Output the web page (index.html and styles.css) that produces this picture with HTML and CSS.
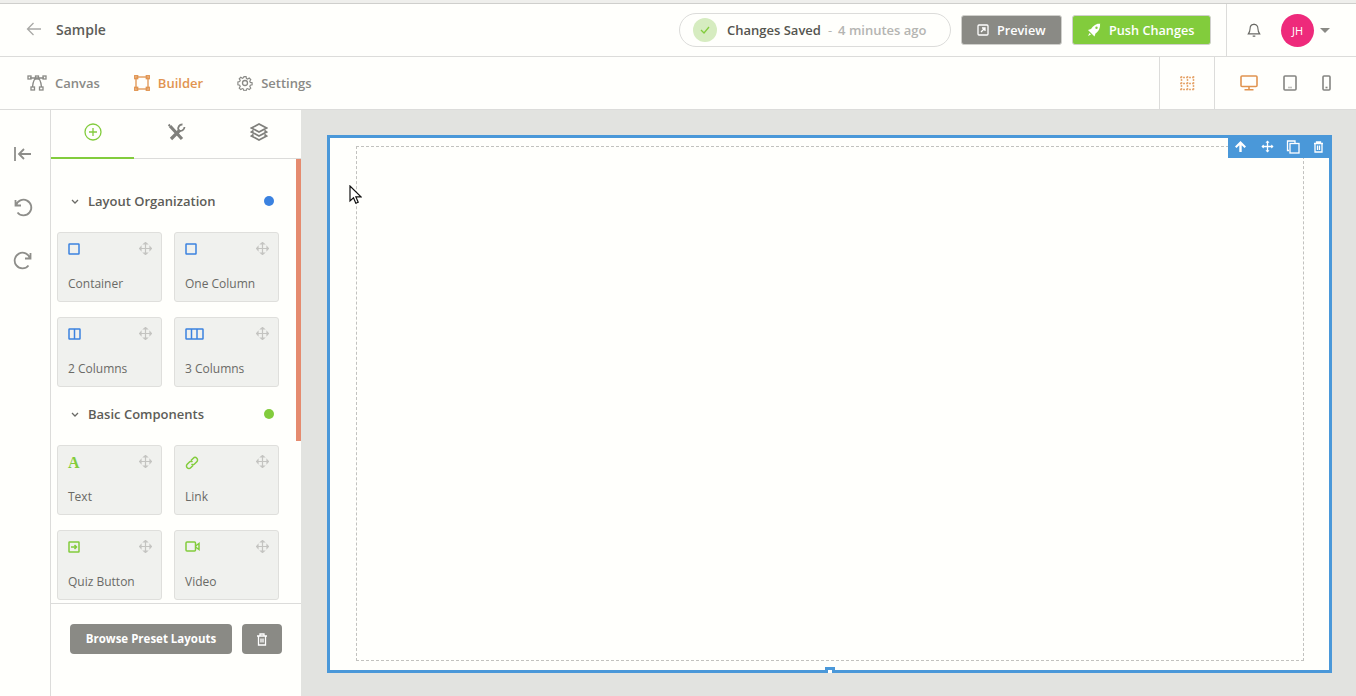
FILE: index.html
```html
<!DOCTYPE html>
<html lang="en">
  <head>
    <meta charset="UTF-8" />
    <title>Sample - Builder</title>
    <link rel="stylesheet" href="styles.css">
  </head>
  <body>
    <div class="top-bar">
      <div class="title-group">
        <svg class="back-icon" width="16" height="14" viewBox="0 0 16 14"><path d="M15 7H1.500M7.500 1l-6 6 6 6" /></svg>
        <span class="page-title">Sample</span>
      </div>
      <div class="save-pill">
        <span class="save-check">
          <svg width="10" height="8" viewBox="0 0 10 8"><path d="M1 4l3 3 5-6" /></svg>
        </span>
        <span class="save-text">Changes Saved</span>
        <span class="save-dash">-</span>
        <span class="save-time">4 minutes ago</span>
      </div>
      <button class="btn btn-grey">
        <svg width="12" height="12" viewBox="0 0 12 12"><rect x="1" y="1" width="10" height="10" rx="1" /><path d="M4 8l4-4M5 4h3v3" /></svg>
        Preview
      </button>
      <button class="btn btn-green">
        <svg width="14" height="14" viewBox="0 0 14 14"><path class="solid" fill-rule="evenodd" d="M13.500.500C9.500.500 6 2.500 4 6L1 7l2 2 2.500 2.500 2 2 1-3c3-2 5-5.500 4.500-10zM9.500 3.500a1.200 1.200 0 1 1 0 2.400 1.200 1.200 0 0 1 0-2.400zM2.500 10 1 13l3-1.500z" /></svg>
        Push Changes
      </button>
      <div class="user-area">
        <svg class="bell" width="14" height="16" viewBox="0 0 16 17"><path d="M8 2c-3 0-4.500 2-4.500 5 0 3-1 4.500-2 6h13c-1-1.500-2-3-2-6 0-3-1.500-5-4.500-5zM8 1v1M6.500 15.500h3" /></svg>
        <span class="avatar">JH</span>
        <span class="caret"></span>
      </div>
    </div>

    <div class="nav-bar">
      <a class="nav-item">
        <svg width="20" height="16" viewBox="0 0 20 16"><path d="M3 3h14M10 3C7 3 6 7 5.500 12M10 3c3 0 4 4 4.500 9" /><rect x="1" y="1" width="3" height="3" /><rect x="8.500" y="1" width="3" height="3" /><rect x="16" y="1" width="3" height="3" /><rect x="4" y="12" width="3.500" height="3" /><rect x="12.500" y="12" width="3.500" height="3" /></svg>
        Canvas
      </a>
      <a class="nav-item active">
        <svg width="16" height="16" viewBox="0 0 16 16"><rect x="2" y="2" width="12" height="12" /><rect class="handle" x="0.700" y="0.700" width="3" height="3" /><rect class="handle" x="12.300" y="0.700" width="3" height="3" /><rect class="handle" x="0.700" y="12.300" width="3" height="3" /><rect class="handle" x="12.300" y="12.300" width="3" height="3" /></svg>
        Builder
      </a>
      <a class="nav-item">
        <svg width="16" height="16" viewBox="0 0 16 16"><circle cx="8" cy="8" r="2.500" /><path d="M6.800 1h2.400l.4 2 1.300.6 1.800-1.100 1.700 1.700-1.100 1.800.6 1.300 2 .4v2.400l-2 .4-.6 1.300 1.100 1.800-1.700 1.700-1.800-1.100-1.300.6-.4 2H6.800l-.4-2-1.300-.6-1.800 1.100-1.700-1.700 1.100-1.800-.6-1.300-2-.4V6.800l2-.4.6-1.300-1.100-1.800 1.700-1.700 1.800 1.100 1.300-.6z" transform="translate(0.800 0.800) scale(.9)" /></svg>
        Settings
      </a>
      <div class="view-tools">
        <div class="tool-cell grid-cell">
          <svg width="15" height="15" viewBox="0 0 15 15"><path class="dots" d="M0 1.500h15M0 7.500h15M0 13.500h15M1.500 0v15M7.500 0v15M13.500 0v15" /></svg>
        </div>
        <div class="tool-cell device-cell">
          <svg class="active-device" width="18" height="16" viewBox="0 0 18 16"><rect x="1" y="1" width="16" height="10.500" rx="1" /><path d="M9 11.500V14M4.500 14.800h9" /></svg>
          <svg width="14" height="16" viewBox="0 0 14 16"><rect x="1" y="1" width="12" height="14" rx="1" /><path class="pale" d="M5 12.500h4" /></svg>
          <svg width="9" height="16" viewBox="0 0 9 16"><rect x="1" y="1" width="7" height="14" rx="1" /><path d="M3.500 12.500h2" /></svg>
        </div>
      </div>
    </div>

    <div class="workspace">
      <div class="rail">
        <svg class="collapse" width="20" height="16" viewBox="0 0 20 16"><path d="M2 1v14M18 8H6M11 3 6 8l5 5" /></svg>
        <svg width="20" height="20" viewBox="0 0 20 20"><path d="M2.500 3v5.500H8M3 8.500a7.800 7.800 0 1 1 1.500 7" /></svg>
        <svg width="20" height="20" viewBox="0 0 20 20"><path d="M17.500 3v5.500H12M17 8.500a7.800 7.800 0 1 0-1.500 7" /></svg>
      </div>

      <div class="panel">
        <div class="panel-tabs">
          <div class="panel-tab selected">
            <svg width="18" height="18" viewBox="0 0 18 18"><circle cx="9" cy="9" r="8" /><path d="M9 5v8M5 9h8" /></svg>
          </div>
          <div class="panel-tab">
            <svg class="tools-icon" width="19" height="19" viewBox="0 0 19 19"><path class="thick" d="M3 3l12 13M13 7 4 16" /><path d="M15.500 1.500a4 4 0 0 0-4 5.500M17.500 4a4 4 0 0 1-5.500 3.500M1.500 3 3 1.500" /></svg>
          </div>
          <div class="panel-tab">
            <svg class="layers-icon" width="18" height="18" viewBox="0 0 18 18"><path d="M9 1 1.500 5 9 9l7.500-4zM3.500 7.500 1.500 9 9 13l7.500-4-2-1.500M3.500 11.500l-2 1.500L9 17l7.500-4-2-1.500" /></svg>
          </div>
        </div>

        <div class="panel-body">
          <div class="scroll-thumb"></div>

          <div class="section-head first">
            <svg width="8" height="5" viewBox="0 0 8 5"><path d="M1 1l3 3 3-3" /></svg>
            <span class="section-name">Layout Organization</span>
            <span class="dot dot-blue"></span>
          </div>
          <div class="card-grid blue">
            <div class="card">
              <div class="card-top">
                <svg class="item-icon" width="12" height="12" viewBox="0 0 12 12"><rect x="1" y="1" width="10" height="10" rx=".5" /></svg>
                <svg class="drag" width="13" height="13" viewBox="0 0 13 13"><path d="M6.500 0v13M0 6.500h13M4.800 2 6.500.5 8.200 2zM4.800 11l1.700 1.500L8.200 11zM2 4.800.5 6.500 2 8.200zM11 4.800l1.500 1.700L11 8.200z" /></svg>
              </div>
              <span class="card-label">Container</span>
            </div>
            <div class="card">
              <div class="card-top">
                <svg class="item-icon" width="12" height="12" viewBox="0 0 12 12"><rect x="1" y="1" width="10" height="10" rx=".5" /></svg>
                <svg class="drag" width="13" height="13" viewBox="0 0 13 13"><path d="M6.500 0v13M0 6.500h13M4.800 2 6.500.5 8.200 2zM4.800 11l1.700 1.500L8.200 11zM2 4.800.5 6.500 2 8.200zM11 4.800l1.500 1.700L11 8.200z" /></svg>
              </div>
              <span class="card-label">One Column</span>
            </div>
            <div class="card">
              <div class="card-top">
                <svg class="item-icon" width="13" height="12" viewBox="0 0 13 12"><rect x="1" y="1" width="11" height="10" rx=".5" /><path d="M6.500 1v10" /></svg>
                <svg class="drag" width="13" height="13" viewBox="0 0 13 13"><path d="M6.500 0v13M0 6.500h13M4.800 2 6.500.5 8.200 2zM4.800 11l1.700 1.500L8.200 11zM2 4.800.5 6.500 2 8.200zM11 4.800l1.500 1.700L11 8.200z" /></svg>
              </div>
              <span class="card-label">2 Columns</span>
            </div>
            <div class="card">
              <div class="card-top">
                <svg class="item-icon" width="19" height="12" viewBox="0 0 19 12"><rect x="1" y="1" width="17" height="10" rx=".5" /><path d="M6.500 1v10M12 1v10" /></svg>
                <svg class="drag" width="13" height="13" viewBox="0 0 13 13"><path d="M6.500 0v13M0 6.500h13M4.800 2 6.500.5 8.200 2zM4.800 11l1.700 1.500L8.200 11zM2 4.800.5 6.500 2 8.200zM11 4.800l1.500 1.700L11 8.200z" /></svg>
              </div>
              <span class="card-label">3 Columns</span>
            </div>
          </div>

          <div class="section-head">
            <svg width="8" height="5" viewBox="0 0 8 5"><path d="M1 1l3 3 3-3" /></svg>
            <span class="section-name">Basic Components</span>
            <span class="dot dot-green"></span>
          </div>
          <div class="card-grid green">
            <div class="card">
              <div class="card-top">
                <span class="text-glyph">A</span>
                <svg class="drag" width="13" height="13" viewBox="0 0 13 13"><path d="M6.500 0v13M0 6.500h13M4.800 2 6.500.5 8.200 2zM4.800 11l1.700 1.500L8.200 11zM2 4.800.5 6.500 2 8.200zM11 4.800l1.500 1.700L11 8.200z" /></svg>
              </div>
              <span class="card-label">Text</span>
            </div>
            <div class="card">
              <div class="card-top">
                <svg class="item-icon" width="14" height="14" viewBox="0 0 14 14"><path d="M6 4.500 8.300 2.200a2.200 2.200 0 0 1 3.500 3.500L9.500 8a2.200 2.200 0 0 1-3 0M8 9.500l-2.300 2.300a2.200 2.200 0 0 1-3.500-3.500L4.500 6a2.200 2.200 0 0 1 3 0" /></svg>
                <svg class="drag" width="13" height="13" viewBox="0 0 13 13"><path d="M6.500 0v13M0 6.500h13M4.800 2 6.500.5 8.200 2zM4.800 11l1.700 1.500L8.200 11zM2 4.800.5 6.500 2 8.200zM11 4.800l1.500 1.700L11 8.200z" /></svg>
              </div>
              <span class="card-label">Link</span>
            </div>
            <div class="card">
              <div class="card-top">
                <svg class="item-icon" width="12" height="12" viewBox="0 0 12 12"><rect x="1" y="1" width="10" height="10" rx=".5" /><path d="M3 6h5.500M6.500 4l2 2-2 2" /></svg>
                <svg class="drag" width="13" height="13" viewBox="0 0 13 13"><path d="M6.500 0v13M0 6.500h13M4.800 2 6.500.5 8.200 2zM4.800 11l1.700 1.500L8.200 11zM2 4.800.5 6.500 2 8.200zM11 4.800l1.500 1.700L11 8.200z" /></svg>
              </div>
              <span class="card-label">Quiz Button</span>
            </div>
            <div class="card">
              <div class="card-top">
                <svg class="item-icon" width="15" height="11" viewBox="0 0 15 11"><rect x="1" y="1" width="9.500" height="9" rx="1" /><path d="M10.500 5 14 2.500v6L10.500 6" /></svg>
                <svg class="drag" width="13" height="13" viewBox="0 0 13 13"><path d="M6.500 0v13M0 6.500h13M4.800 2 6.500.5 8.200 2zM4.800 11l1.700 1.500L8.200 11zM2 4.800.5 6.500 2 8.200zM11 4.800l1.500 1.700L11 8.200z" /></svg>
              </div>
              <span class="card-label">Video</span>
            </div>
          </div>
        </div>

        <div class="panel-foot">
          <button class="foot-btn browse">Browse Preset Layouts</button>
          <button class="foot-btn trash">
            <svg width="12" height="13" viewBox="0 0 12 13"><path d="M1 3h10M4 3V1h4v2M2.500 3v9h7V3M5 5.500v4M7 5.500v4" /></svg>
          </button>
        </div>
      </div>

      <div class="stage">
        <div class="frame">
          <div class="frame-tools">
            <svg width="13" height="13" viewBox="0 0 13 13"><path class="solid" d="M6.500 1 12 6.500 10.500 8 7.700 5.300V12H5.300V5.300L2.500 8 1 6.500z" /></svg>
            <svg class="move-tool" width="13" height="13" viewBox="0 0 13 13"><path d="M6.500 1v11M1 6.500h11" /><path class="solid" d="M4.500 2.800 6.500.4l2 2.400zM4.500 10.200l2 2.400 2-2.400zM2.800 4.500.4 6.500l2.400 2zM10.200 4.500l2.400 2-2.400 2z" /></svg>
            <svg width="14" height="14" viewBox="0 0 14 14"><path d="M3 10.500H1.500V1H9v2" /><rect x="4" y="3.500" width="9" height="9.500" /></svg>
            <svg width="11" height="12" viewBox="0 0 11 12"><path d="M1 2.500h9M3.500 2.500V1h4v1.500M2 2.500V11h7V2.500M4.500 4.500v4.500M6.500 4.500v4.500" /></svg>
          </div>
          <div class="drop-zone"></div>
          <span class="resize-handle"></span>
        </div>
      </div>
    </div>

    <svg class="cursor" width="13" height="20" viewBox="0 0 13 20"><path d="M1 1v15l3.500-3.200 2.300 5.400 2.400-1-2.300-5.300H12z" /></svg>
  </body>
</html>
```

FILE: styles.css
```css
:root {
  --page: #fffffc;
  --line: #dcdcda;
  --canvas: #e2e3e0;
  --text: #4d4d4a;
  --muted: #8a8a86;
  --grey: #8a8a85;
  --orange: #e19450;
  --green: #82cc3c;
  --blue: #3b82e0;
  --frame: #4a98d9;
}

* {
  margin: 0;
  padding: 0;
  box-sizing: border-box;
  font-family: "Open Sans", "Liberation Sans", sans-serif;
}

html,
body {
  height: 696px;
  overflow: hidden;
}

body {
  background: var(--page);
  color: var(--text);
  display: flex;
  flex-direction: column;
  border-top: 3px solid #efefec;
  font-size: 13px;
}

svg {
  display: block;
  flex: none;
  fill: none;
  stroke: currentColor;
  stroke-width: 1.300;
}

svg .solid {
  fill: currentColor;
  stroke: none;
}

/* top bar */
.top-bar {
  height: 54px;
  flex: none;
  display: flex;
  align-items: center;
  border-top: 1px solid #cfcfcc;
  border-bottom: 1px solid var(--line);
  padding-left: 26px;
}

.title-group {
  display: flex;
  align-items: center;
  gap: 14px;
  margin-right: auto;
  padding-bottom: 2px;
}

.back-icon {
  color: #a9a9a6;
}

.page-title {
  font-size: 14px;
  font-weight: 600;
  color: #5d5d58;
}

.save-pill {
  width: 272px;
  height: 34px;
  display: flex;
  align-items: center;
  border: 1px solid var(--line);
  border-radius: 17px;
  padding-left: 13px;
  margin-right: 10px;
  font-size: 13px;
  white-space: nowrap;
}

.save-check {
  width: 24px;
  height: 24px;
  border-radius: 50%;
  background: #d6ecc0;
  color: var(--green);
  display: flex;
  align-items: center;
  justify-content: center;
  margin-right: 10px;
}

.save-text {
  font-weight: 600;
  color: #55554f;
}

.save-dash {
  color: #b5b5b2;
  margin: 0 6px 0 7px;
}

.save-time {
  color: #b5b5b2;
  font-weight: 600;
}

.btn {
  height: 30px;
  display: flex;
  align-items: center;
  gap: 8px;
  border: 1px solid #d0d0cc;
  border-radius: 3px;
  color: #fff;
  font-size: 12.700px;
  font-weight: 600;
}

.btn-grey {
  width: 101px;
  background: var(--grey);
  padding-left: 15px;
  margin-right: 10px;
}

.btn-green {
  width: 139px;
  background: var(--green);
  padding-left: 14px;
  margin-right: 15px;
}

.user-area {
  width: 130px;
  height: 52px;
  display: flex;
  align-items: center;
  border-left: 1px solid var(--line);
  padding-left: 20px;
  color: #6a6a66;
}

.avatar {
  width: 33px;
  height: 33px;
  border-radius: 50%;
  background: #ee2a7b;
  color: #fff;
  font-size: 11px;
  display: flex;
  align-items: center;
  justify-content: center;
  margin-left: 20px;
}

.caret {
  width: 0;
  height: 0;
  border: 5px solid transparent;
  border-top: 5px solid var(--grey);
  border-bottom: 0;
  margin-left: 6px;
}

/* builder nav */
.nav-bar {
  height: 53px;
  flex: none;
  display: flex;
  align-items: center;
  border-bottom: 1px solid var(--line);
  padding-left: 27px;
}

.nav-item {
  display: flex;
  align-items: center;
  gap: 8px;
  margin-right: 34px;
  font-size: 13px;
  font-weight: 600;
  color: var(--muted);
}

.nav-item.active {
  color: var(--orange);
}

.view-tools {
  margin-left: auto;
  height: 52px;
  display: flex;
}

.tool-cell {
  display: flex;
  align-items: center;
  border-left: 1px solid var(--line);
}

.grid-cell {
  width: 55px;
  justify-content: center;
  color: var(--orange);
}

.dots {
  stroke-dasharray: 2 1;
  stroke-width: 1.500;
  opacity: 0.8;
}

.device-cell {
  width: 142px;
  gap: 25px;
  padding-left: 25px;
  color: #858581;
}

.device-cell svg {
  stroke-width: 1.600;
}

.device-cell .pale {
  opacity: 0.5;
}

.active-device {
  color: var(--orange);
}

/* workspace */
.workspace {
  flex: 1;
  min-height: 0;
  display: flex;
}

.rail {
  width: 51px;
  flex: none;
  border-right: 1px solid var(--line);
  display: flex;
  flex-direction: column;
  align-items: center;
  gap: 33px;
  padding: 36px 4px 0 0;
  color: #8e8e8a;
}

.rail svg {
  stroke-width: 1.800;
}

.rail .collapse {
  margin-bottom: 2px;
}

.panel {
  width: 250px;
  flex: none;
  display: flex;
  flex-direction: column;
}

.panel-tabs {
  height: 49px;
  flex: none;
  display: flex;
  border-bottom: 1px solid var(--line);
}

.panel-tab {
  flex: 1;
  height: 49px;
  display: flex;
  justify-content: center;
  padding-top: 13px;
  color: #80807c;
}

.panel-tab.selected {
  color: var(--green);
  border-bottom: 2px solid var(--green);
}

.tools-icon {
  stroke-width: 1.800;
  margin-left: 2px;
}

.tools-icon .thick {
  stroke-width: 3.200;
}

.layers-icon {
  stroke-width: 1.700;
}

.panel-body {
  flex: 1;
  min-height: 0;
  position: relative;
  overflow: hidden;
  padding-left: 6px;
}

.scroll-thumb {
  position: absolute;
  top: 0;
  right: 0;
  width: 5px;
  height: 282px;
  background: #e58b6f;
}

.section-head {
  height: 20px;
  display: flex;
  align-items: center;
  margin: 17px 27px 21px 0;
  padding-left: 14px;
  color: #6a6a66;
}

.section-head.first {
  margin-top: 32px;
}

.section-name {
  font-size: 13px;
  font-weight: 600;
  color: #5d5d58;
  margin-left: 9px;
}

.dot {
  width: 10px;
  height: 10px;
  border-radius: 50%;
  margin-left: auto;
}

.dot-blue {
  background: var(--blue);
}

.dot-green {
  background: var(--green);
}

.card-grid {
  display: grid;
  grid-template-columns: 105px 105px;
  grid-auto-rows: 70px;
  gap: 15px 12px;
}

.card-grid .item-icon {
  stroke-width: 1.500;
}

.card-grid.blue .item-icon {
  color: var(--blue);
}

.card-grid.green .item-icon,
.text-glyph {
  color: var(--green);
}

.card {
  background: #f0f1ee;
  border: 1px solid #dfdfdc;
  border-radius: 3px;
  padding: 10px 10px 0;
  display: flex;
  flex-direction: column;
}

.card-top {
  height: 31px;
  display: flex;
  justify-content: space-between;
  align-items: flex-start;
}

.drag {
  color: #c4c4c1;
  stroke-width: 1.200;
  margin: -1px -1px 0 0;
}

.drag path {
  fill: #c4c4c1;
}

.text-glyph {
  font-family: "Liberation Serif", serif;
  font-size: 16px;
  font-weight: 700;
  line-height: 14px;
}

.card-label {
  font-size: 12px;
  line-height: 20px;
  color: #6a6a66;
}

.panel-foot {
  height: 93px;
  flex: none;
  border-top: 1px solid var(--line);
  display: flex;
  gap: 10px;
  padding: 20px 0 0 19px;
}

.foot-btn {
  height: 30px;
  border: none;
  border-radius: 4px;
  background: var(--grey);
  color: #fff;
  font-size: 11.500px;
  font-weight: 700;
}

.browse {
  width: 162px;
  padding-bottom: 2px;
}

.trash {
  width: 40px;
  display: flex;
  align-items: center;
  justify-content: center;
}

/* canvas */
.stage {
  flex: 1;
  background: var(--canvas);
  padding: 25px 24px 23px 26px;
}

.frame {
  height: 538px;
  position: relative;
  background: var(--page);
  border: 3px solid var(--frame);
  padding: 8px 25px 9px 26px;
}

.drop-zone {
  height: 100%;
  border: 1px dashed #c2c2bf;
}

.frame-tools {
  position: absolute;
  top: -3px;
  right: -3px;
  width: 104px;
  height: 23px;
  background: var(--frame);
  color: #fff;
  display: flex;
  align-items: center;
  gap: 13px;
  padding-left: 6px;
}

.move-tool {
  margin-left: 1px;
  margin-right: -1px;
}

.resize-handle {
  position: absolute;
  left: 495px;
  bottom: -3px;
  width: 10px;
  height: 6px;
  background: #fff;
  border: 3px solid var(--frame);
  border-bottom: 0;
}

.cursor {
  position: absolute;
  left: 349px;
  top: 185px;
  fill: #fff;
  stroke: #111;
  stroke-width: 1.200;
}
```
